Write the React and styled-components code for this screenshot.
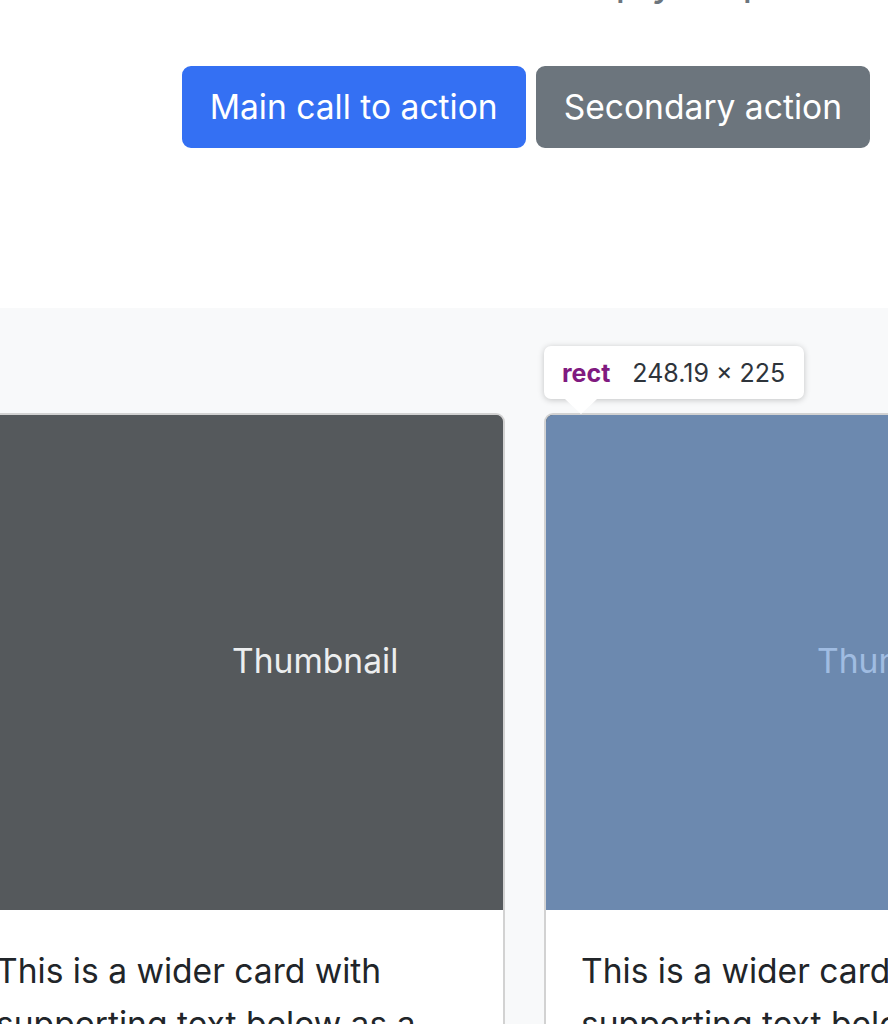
import React from "react";
import styled, { createGlobalStyle } from "styled-components";

const Global = createGlobalStyle`
  html, body { margin: 0; padding: 0; background: #ffffff; }
  body {
    font-family: Inter, "Liberation Sans", Arial, sans-serif;
    color: #212529;
    overflow: hidden;
    -webkit-font-smoothing: antialiased;
  }
`;

const Page = styled.div`
  width: 888px;
  height: 1024px;
  overflow: hidden;
  display: flex;
  flex-direction: column;
`;

const Hero = styled.section`
  height: 308px;
  flex: 0 0 308px;
  background: #ffffff;
  overflow: hidden;
  display: flex;
  flex-direction: column;
`;

const Lead = styled.p`
  margin: -53px 0 0 0;
  padding-left: 34px;
  font-size: 42px;
  line-height: 66px;
  color: #6c757d;
  text-align: center;
  white-space: nowrap;
`;

const Actions = styled.div`
  margin-top: 53px;
  display: flex;
  justify-content: flex-end;
  gap: 10px;
  padding-right: 18px;
`;

const Button = styled.button`
  font-family: inherit;
  font-size: 33.6px;
  line-height: 52px;
  padding: 13px 26px;
  border: 2px solid ${(p) => p.$bg};
  border-radius: 9px;
  background: ${(p) => p.$bg};
  color: #ffffff;
  cursor: pointer;
`;

const Album = styled.section`
  flex: 1;
  background: #f8f9fa;
  padding-top: 105px;
  overflow: hidden;
`;

const Row = styled.div`
  display: flex;
  gap: 39px;
  margin-left: -41px;
  width: 2000px;
`;

const Slot = styled.div`
  position: relative;
  flex: 0 0 546px;
`;

const Card = styled.div`
  border: 2px solid rgba(0, 0, 0, 0.175);
  border-radius: 9px;
  background: #ffffff;
  overflow: hidden;
`;

const Thumb = styled.div`
  position: relative;
  height: 495px;
  background: #55595c;
`;

const ThumbSvg = styled.svg`
  display: block;
  width: 100%;
  height: 100%;
`;

const Highlight = styled.div`
  position: absolute;
  inset: 0;
  background: rgba(120, 163, 218, 0.66);
`;

const Body = styled.div`
  padding: 35px;
`;

const CardText = styled.p`
  margin: 0;
  font-size: 33.6px;
  line-height: 52.5px;
  color: #212529;
`;

const Tip = styled.div`
  position: absolute;
  top: -67px;
  left: 0;
  height: 53px;
  padding: 0 19px 0 18px;
  display: flex;
  align-items: center;
  gap: 22px;
  background: #ffffff;
  border-radius: 7px;
  box-shadow: 0 1px 6px rgba(0, 0, 0, 0.22);
  font-size: 25px;
  white-space: nowrap;
  z-index: 2;
  &::after {
    content: "";
    position: absolute;
    left: 21px;
    bottom: -15px;
    border-left: 16px solid transparent;
    border-right: 16px solid transparent;
    border-top: 15px solid #ffffff;
  }
`;

const TipTag = styled.span`
  font-weight: 700;
  color: #801a80;
`;

const TipSize = styled.span`
  color: #2e343b;
`;

function Thumbnail({ highlighted }) {
  return (
    <Thumb>
      <ThumbSvg xmlns="http://www.w3.org/2000/svg" preserveAspectRatio="xMidYMid slice">
        <rect width="100%" height="100%" fill="#55595c" />
        <text
          x="50%"
          y="50%"
          dy=".3em"
          fill="#eceeef"
          fontSize="33.6"
          fontFamily="Inter, 'Liberation Sans', Arial, sans-serif"
        >
          Thumbnail
        </text>
      </ThumbSvg>
      {highlighted && <Highlight />}
    </Thumb>
  );
}

const cardText =
  "This is a wider card with supporting text below as a natural lead-in to additional content. This content is a little bit longer.";

export default function App() {
  return (
    <>
      <Global />
      <Page>
        <Hero>
          <Lead>short so folks don’t simply skip</Lead>
          <Actions>
            <Button $bg="#3470f3">Main call to action</Button>
            <Button $bg="#6c757d">Secondary action</Button>
          </Actions>
        </Hero>
        <Album>
          <Row>
            <Slot>
              <Card>
                <Thumbnail />
                <Body>
                  <CardText>{cardText}</CardText>
                </Body>
              </Card>
            </Slot>
            <Slot>
              <Tip>
                <TipTag>rect</TipTag>
                <TipSize>248.19 × 225</TipSize>
              </Tip>
              <Card>
                <Thumbnail highlighted />
                <Body>
                  <CardText>{cardText}</CardText>
                </Body>
              </Card>
            </Slot>
          </Row>
        </Album>
      </Page>
    </>
  );
}
